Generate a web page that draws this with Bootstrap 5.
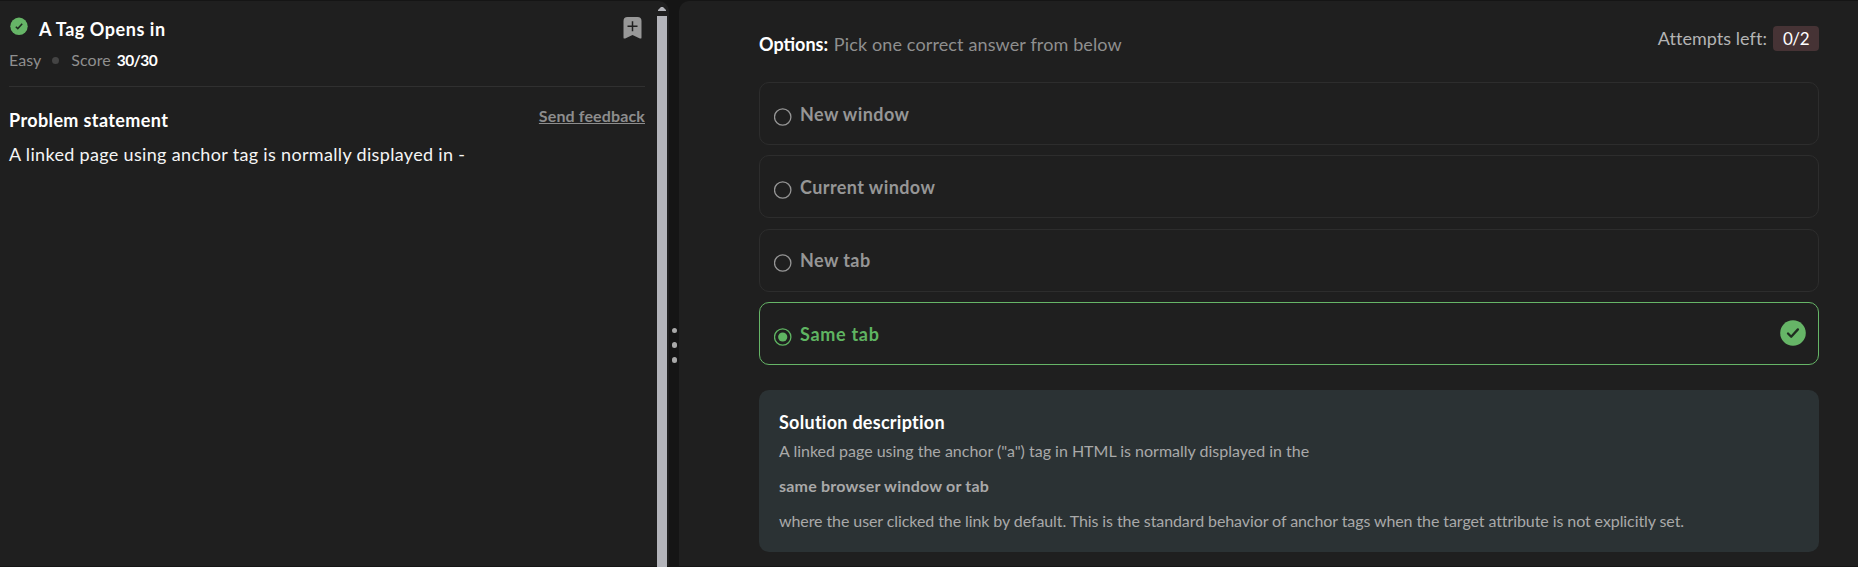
<!DOCTYPE html>
<html lang="en" data-bs-theme="dark">
<head>
<meta charset="utf-8">
<meta name="viewport" content="width=device-width, initial-scale=1">
<title>A Tag Opens in</title>
<link href="https://cdn.jsdelivr.net/npm/bootstrap@5.3.0/dist/css/bootstrap.min.css" rel="stylesheet">
<style>
body{background:#151515;color:#f5f5f5;font:400 18px/24px Lato,"Liberation Sans",sans-serif;height:567px;overflow:hidden}
.pane{background:#1f1f1f;height:565px;margin-top:1px}
.problem{width:669px;border-radius:0 10px 0 0;flex:none}
.problem-body{width:636px;margin-left:9px;padding-top:15px}
.splitter{width:10px;flex:none;gap:9.6px;padding:327.5px 0 0 1px}
.splitter i{width:5.4px;height:5.4px;border-radius:50%;background:#a9a9a9}
.answers{border-radius:10px 0 0 0;padding:0 39px 0 80px}
.scroller{width:10px;margin-right:2px;height:566px}
.scroller svg{margin-top:6px;flex:none}
.thumb{background:#b3b4ba;margin-top:5px}
.title-line{letter-spacing:.55px;height:24px}
.title-line span{padding:1px 0 0 10px}
.bookmark{margin:1px 3px 0 0}
.meta{font-size:16px;color:#8f8f8f;margin-top:8px;height:24px}
.meta span{letter-spacing:.05px}
.meta b{color:#fff;font-size:15.5px;letter-spacing:-.55px;margin-left:6px}
.dot{width:7px;height:7px;border-radius:50%;background:#444;margin:1px 12px 0 11px}
.rule{height:1px;background:#303030;margin:14px 0 16px}
.feedback{font-size:16px;font-weight:700;color:#8d8d8d;letter-spacing:.13px;text-decoration:underline;text-decoration-thickness:1px;text-underline-offset:1px;margin-top:1px}
.statement{margin-top:10px;letter-spacing:.33px}
.heading{letter-spacing:.38px;padding-top:5px}
.top-row{padding-top:25px;height:81px}
.prompt{padding-top:6px}
.hint{color:#8f8f8f;letter-spacing:.13px;padding-left:1px}
.attempts{color:#b4b4b4;letter-spacing:.05px}
.count{background:#463335;color:#fff;border-radius:4px;width:46px;height:25px;margin-left:6px;font-size:17px;letter-spacing:-.4px}
.choices{gap:10.4px}
.choice{height:63px;border:1px solid #2d2d2d;border-radius:10px;padding:0 12px 0 14px;color:#969696;font-weight:700;letter-spacing:.42px}
.choice.right{border-color:#66b567;color:#5fb562}
.choice svg:first-child{margin:6px 8px 0 0}
.choice.right span{letter-spacing:.7px}
.choice .tick{margin-top:-1px}
.solution{background:#2b3234;border-radius:10px;margin-top:25px;padding:20px;height:162px;color:#a9a9a9;font-size:16px}
.solution h2{font-size:18px;line-height:24px;font-weight:700;color:#fff;letter-spacing:.27px;margin:0 0 5px}
.solution p{margin:0 0 11px;white-space:nowrap}
.s1{letter-spacing:-.005px}.s2{letter-spacing:.21px}.s3{letter-spacing:-.087px}
</style>
</head>
<body class="d-flex">
<section class="pane problem d-flex justify-content-between">
  <div class="problem-body">
    <div class="title-line d-flex fw-bold text-white">
      <svg width="20" height="20" viewBox="0 0 20 20"><circle cx="10" cy="10.3" r="8.7" fill="#66b567"/><path d="M6.8 10.7l2 1.9 4.4-4.9" fill="none" stroke="#1f2b20" stroke-width="1.5"/></svg>
      <span>A Tag Opens in</span>
      <svg class="bookmark ms-auto" width="19" height="22" viewBox="0 0 19 22"><path d="M4.5 0h10a4 4 0 0 1 4 4v16.4q0 1.7-1.6 1L9.5 18l-7.3 3.4q-1.7.7-1.7-1V4a4 4 0 0 1 4-4z" fill="#989898"/><path d="M9.5 4.2v10M4.5 9.2h10" stroke="#1f1f1f" stroke-width="1.5"/></svg>
    </div>
    <div class="meta d-flex align-items-center"><span>Easy</span><i class="dot"></i><span>Score</span><b>30/30</b></div>
    <div class="rule"></div>
    <div class="d-flex justify-content-between"><div class="heading fw-bold text-white">Problem statement</div><a href="#" class="feedback">Send feedback</a></div>
    <div class="statement">A linked page using anchor tag is normally displayed in -</div>
  </div>
  <div class="scroller d-flex flex-column align-items-center">
    <svg width="8" height="4" viewBox="0 0 8 4"><path d="M0 4h8v-1L5 0H3L0 3z" fill="#b3b4ba"/></svg>
    <div class="thumb flex-grow-1 w-100"></div>
  </div>
</section>
<div class="splitter d-flex flex-column align-items-center"><i></i><i></i><i></i></div>
<main class="pane answers flex-grow-1">
  <div class="top-row d-flex justify-content-between">
    <div class="prompt"><b class="text-white">Options:</b><span class="hint"> Pick one correct answer from below</span></div>
    <div class="d-flex attempts"><span>Attempts left:</span><span class="count d-flex align-items-center justify-content-center">0/2</span></div>
  </div>
  <div class="choices d-flex flex-column">
    <label class="choice d-flex align-items-center"><svg width="18" height="18" viewBox="0 0 18 18"><circle cx="8.7" cy="9" r="8.2" fill="none" stroke="currentColor" stroke-width="1.3"/></svg><span>New window</span></label>
    <label class="choice d-flex align-items-center"><svg width="18" height="18" viewBox="0 0 18 18"><circle cx="8.7" cy="9" r="8.2" fill="none" stroke="currentColor" stroke-width="1.3"/></svg><span>Current window</span></label>
    <label class="choice d-flex align-items-center"><svg width="18" height="18" viewBox="0 0 18 18"><circle cx="8.7" cy="9" r="8.2" fill="none" stroke="currentColor" stroke-width="1.3"/></svg><span>New tab</span></label>
    <label class="choice right d-flex align-items-center"><svg width="18" height="18" viewBox="0 0 18 18"><circle cx="8.7" cy="9" r="8.2" fill="none" stroke="currentColor" stroke-width="1.3"/><circle cx="8.7" cy="9" r="4.6" fill="currentColor"/></svg><span>Same tab</span>
      <svg class="tick ms-auto" width="26" height="26" viewBox="0 0 26 26"><circle cx="13" cy="13" r="12.8" fill="#66b567"/><path d="M8 13.5l3.2 3.2 6.7-7.3" fill="none" stroke="#1f2b20" stroke-width="2.3" stroke-linecap="round" stroke-linejoin="round"/></svg></label>
  </div>
  <div class="solution">
    <h2>Solution description</h2>
    <p class="s1">A linked page using the anchor ("a") tag in HTML is normally displayed in the</p>
    <p class="s2 fw-bold">same browser window or tab</p>
    <p class="s3">where the user clicked the link by default. This is the standard behavior of anchor tags when the target attribute is not explicitly set.</p>
  </div>
</main>
<script src="https://cdn.jsdelivr.net/npm/bootstrap@5.3.0/dist/js/bootstrap.bundle.min.js"></script>
</body>
</html>
